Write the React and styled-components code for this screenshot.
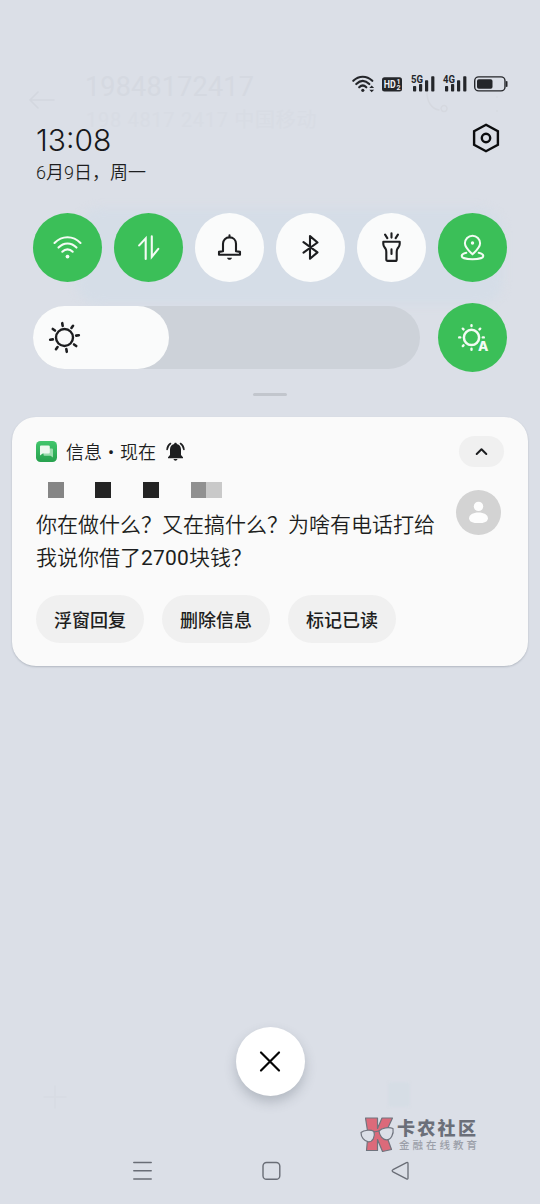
import React from "react";
import styled, { createGlobalStyle } from "styled-components";

const Global = createGlobalStyle`
  * { box-sizing: border-box; }
  html, body { margin: 0; padding: 0; background: #dbdfe7; }
  body { font-family: "Noto Sans CJK SC", sans-serif; color: #1d1e20; }
`;

const Screen = styled.main`
  position: relative;
  width: 540px;
  height: 1204px;
  overflow: hidden;
  display: flex;
  flex-direction: column;
  background: #dbdfe7;
`;

const Icon = styled.svg`
  display: block;
  flex: none;
  overflow: visible;
  fill: none;
  stroke: currentColor;
  stroke-linecap: round;
  stroke-linejoin: round;
`;

/* dimmed conversation under the shade */
const Backdrop = styled.div`
  position: absolute;
  inset: 0;
  pointer-events: none;
`;
const Ghost = styled.div`
  position: absolute;
  left: ${(p) => p.$x}px;
  top: ${(p) => p.$y}px;
  font-size: ${(p) => p.$size}px;
  line-height: 1.2;
  letter-spacing: ${(p) => p.$track || 0}px;
  color: ${(p) => p.$color || "#d5d9e1"};
  white-space: nowrap;
  font-family: Roboto, "Noto Sans CJK SC", sans-serif;
`;
const GhostBubble = styled.div`
  position: absolute;
  left: 76px;
  top: 208px;
  width: 427px;
  height: 97px;
  border-radius: 24px;
  background: #d5dde7;
  filter: blur(4px);
`;
const GhostChip = styled.div`
  position: absolute;
  left: 388px;
  top: 1082px;
  width: 22px;
  height: 25px;
  border-radius: 3px;
  background: #d6dde5;
  filter: blur(1px);
`;

const Content = styled.div`
  position: relative;
  flex: 1;
  display: flex;
  flex-direction: column;
`;

const StatusBar = styled.header`
  display: flex;
  justify-content: flex-end;
  align-items: flex-start;
  padding: 75px 32px 0 0;
  height: 123px;
  color: #24262a;
`;
const StatusItem = styled.div`
  margin-left: ${(p) => p.$gap || 0}px;
`;

const ClockRow = styled.section`
  display: flex;
  justify-content: space-between;
  align-items: flex-start;
  height: 90px;
  padding: 0 40px 0 36px;
`;
const Time = styled.div`
  font: 300 30px/34px Inter, sans-serif;
  color: #17181b;
`;
const DateText = styled.div`
  margin-top: 3px;
  font-family: Roboto, "Noto Sans CJK SC", sans-serif;
  font-size: 18px;
  line-height: 26px;
  font-weight: 350;
  color: #1d1e20;
`;

const Toggles = styled.section`
  display: flex;
  gap: 12px;
  padding: 0 33px;
`;
const RoundButton = styled.button`
  display: flex;
  align-items: center;
  justify-content: center;
  flex: none;
  width: 69px;
  height: 69px;
  padding: 0 1px 1px 0;
  border: 0;
  border-radius: 50%;
  background: ${(p) => (p.$on ? "#3bbf58" : "#fafbfb")};
  color: ${(p) => (p.$on ? "#f3fbf4" : "#1d1e20")};

  & > svg {
    transform: translate(0.5px, 0.4px);
  }
`;

const BrightnessRow = styled.section`
  display: flex;
  align-items: center;
  gap: 18px;
  padding: 0 33px;
  margin-top: 21px;
`;
const Slider = styled.div`
  flex: 1;
  height: 63px;
  border-radius: 32px;
  background: #cdd2d9;
`;
const SliderFill = styled.div`
  display: flex;
  align-items: center;
  width: 135.5px;
  height: 63px;
  padding: 0 0 1px 16px;
  border-radius: 32px;
  background: #fafbfb;

  & > svg {
    transform: translate(0.5px, 0.5px);
  }
`;

const Handle = styled.div`
  width: 34px;
  height: 3px;
  margin: 21px auto 0;
  border-radius: 2px;
  background: #c2c6cd;
`;

const Card = styled.article`
  height: 249px;
  margin: 21px 12px 0;
  padding: 19px 24px 0;
  border-radius: 24px;
  background: #fafafa;
  box-shadow: 0 1px 2px rgba(70, 80, 95, 0.28);
`;
const CardHead = styled.div`
  display: flex;
  align-items: center;
  height: 31px;
`;
const AppName = styled.span`
  margin: -2px 10px 0 9px;
  font-size: 18px;
  line-height: 30px;
  font-weight: 350;
  white-space: nowrap;
`;
const Collapse = styled.button`
  display: flex;
  align-items: center;
  justify-content: center;
  width: 45px;
  height: 31px;
  margin-left: auto;
  padding: 0;
  border: 0;
  border-radius: 16px;
  background: #f0f0f0;
  color: #1d1e20;
`;
const CardBody = styled.div`
  display: flex;
  justify-content: space-between;
  padding-right: 3px;
`;
const Sender = styled.div`
  display: flex;
  height: 16px;
  margin: 15px 0 0 12px;
`;
const Block = styled.span`
  width: 16px;
  height: 16px;
  margin-left: ${(p) => p.$gap}px;
  background: ${(p) => p.$tone};
`;
const Message = styled.p`
  width: 402px;
  margin: 11px 0 0;
  font-family: Roboto, "Noto Sans CJK SC", sans-serif;
  font-size: 21px;
  line-height: 33px;
  font-weight: 350;
  white-space: nowrap;
`;
const Amount = styled.span`
  font-weight: 400;
  letter-spacing: 0.2px;
`;
const Avatar = styled.div`
  display: flex;
  align-items: center;
  justify-content: center;
  width: 45px;
  height: 45px;
  margin-top: 23px;
  border-radius: 50%;
  background: #d3d3d3;
`;
const Actions = styled.div`
  display: flex;
  gap: 18px;
  margin-top: 20px;
`;
const Action = styled.button`
  width: 108px;
  height: 48px;
  padding: 0;
  border: 0;
  border-radius: 24px;
  background: #f0f0f0;
  color: #1d1e20;
  font: 500 18px/26px "Noto Sans CJK SC", sans-serif;
`;

const CloseButton = styled.button`
  display: flex;
  align-items: center;
  justify-content: center;
  width: 69px;
  height: 69px;
  margin: auto auto 65px;
  padding: 0;
  border: 0;
  border-radius: 50%;
  background: #fff;
  color: #050505;
  box-shadow: 0 6px 12px rgba(60, 70, 85, 0.25);
`;
const NavBar = styled.nav`
  display: flex;
  justify-content: space-between;
  height: 43px;
  padding: 0 131px 0 133px;
  color: #696d76;
`;

const Watermark = styled.div`
  position: absolute;
  left: 360px;
  top: 1116px;
  display: flex;
  gap: 2px;
`;
const Brand = styled.div`
  height: 22px;
  font-size: 18px;
  line-height: 22px;
  font-weight: 900;
  letter-spacing: 2.3px;
  white-space: nowrap;
  color: #6b6f79;
`;
const Tagline = styled.div`
  margin-left: 2px;
  font-size: 10.5px;
  line-height: 13px;
  font-weight: 500;
  letter-spacing: 3px;
  white-space: nowrap;
  color: #9b9fa9;
`;

const StatusWifi = () => (
  <Icon width="24" height="18" viewBox="0 0 24 18" strokeWidth="2.2" strokeLinecap="butt">
    <path d="M1.3 5.8C7 .4 14.500 .4 20.300 5.800M4.300 9C8.500 5 13.200 5 17.300 9M7.200 12.300C9.500 10 12 10 14.300 12.300" />
    <circle cx="10.800" cy="15.300" r="1.600" fill="currentColor" stroke="none" />
    <path d="M17.300 13 19.700 10.400 22.100 13ZM17.300 14.700 19.700 17.300 22.100 14.700Z" fill="currentColor" stroke="none" />
  </Icon>
);

const HdBadge = () => (
  <Icon width="20" height="18" viewBox="0 0 20 18">
    <rect x="0" y="2.300" width="20" height="14.300" rx="2.500" fill="currentColor" stroke="none" />
    <text x="1.800" y="13.300" fontSize="11" fontWeight="700" fontFamily="Roboto, sans-serif" fill="#eef0f4" stroke="none" textLength="12" lengthAdjust="spacingAndGlyphs">HD</text>
    <text x="14.400" y="9" fontSize="7" fontWeight="700" fontFamily="Roboto, sans-serif" fill="#eef0f4" stroke="none">1</text>
    <text x="14.400" y="15.300" fontSize="7" fontWeight="700" fontFamily="Roboto, sans-serif" fill="#eef0f4" stroke="none">2</text>
  </Icon>
);

const Signal = ({ label }) => (
  <Icon width="24" height="18" viewBox="0 0 24 18">
    <g fill="currentColor" stroke="none">
      <rect x="2" y="11" width="3.200" height="5.500" rx="0.800" />
      <rect x="8" y="9" width="3.200" height="7.500" rx="0.800" />
      <rect x="14" y="5.300" width="3.200" height="11.200" rx="0.800" />
      <rect x="20.200" y="1.300" width="3.200" height="15.200" rx="0.800" />
      <text x="0" y="8" fontSize="10" fontWeight="700" fontFamily="Roboto, sans-serif" textLength="12" lengthAdjust="spacingAndGlyphs">{label}</text>
    </g>
  </Icon>
);

const Battery = () => (
  <Icon width="34" height="18" viewBox="0 0 34 18">
    <rect x="0.700" y="1.900" width="30.300" height="14" rx="4" strokeWidth="1.400" />
    <rect x="3" y="4.300" width="15.500" height="9.400" rx="1.800" fill="currentColor" stroke="none" />
    <path d="M32.700 6.800v4.400" strokeWidth="1.600" />
  </Icon>
);

const SettingsIcon = () => (
  <Icon width="28" height="30" viewBox="0 0 28 30" strokeWidth="2.400" color="#0c0d0f">
    <path d="M14 1.800 25.900 8.300V21.700L14 28.200 2.100 21.700V8.300Z" strokeLinejoin="miter" />
    <circle cx="14" cy="15" r="4.200" />
  </Icon>
);

const WifiIcon = () => (
  <Icon width="30" height="24" viewBox="0 0 30 24" strokeWidth="2.100">
    <path d="M2 7.600C9.500-.1 20.500-.1 28 7.600M6 12.200C11.300 6.700 18.700 6.700 24 12.200M9.800 16.300C12.800 13.200 17.200 13.200 20.200 16.300" />
    <circle cx="15" cy="21.200" r="1.900" fill="currentColor" stroke="none" />
  </Icon>
);

const DataIcon = () => (
  <Icon width="22" height="24" viewBox="0 0 22 24" strokeWidth="2.100" strokeLinecap="butt">
    <path d="M8.200 23.500V3L1.700 10M14.300 1V21.500L20.800 13.500" strokeLinejoin="miter" />
  </Icon>
);

const BellIcon = () => (
  <Icon width="24" height="26" viewBox="0 0 24 26" strokeWidth="2.100">
    <path d="M12 1V3M5.500 16.800V9.400C5.500 5.500 8.200 3 12 3S18.500 5.500 18.500 9.400V16.800L22.500 17.500V20.300H1.500V17.500Z" />
    <path d="M9.500 23.400h5c-.5 1.500-1.400 2-2.500 2s-2-.5-2.500-2Z" fill="currentColor" stroke="none" />
  </Icon>
);

const BluetoothIcon = () => (
  <Icon width="18" height="26" viewBox="0 0 18 26" strokeWidth="2.100">
    <path d="M2 7.700 16 18 8.500 24.300V1.700L16 8.100 2 18.300" />
  </Icon>
);

const TorchIcon = () => (
  <Icon width="20" height="30" viewBox="0 0 20 30" strokeWidth="2.100" strokeLinecap="butt">
    <path d="M1.800 9.300H18.200V11.700C18.200 14 17 14.800 16 16.200 15.300 17.200 15.200 18 15.200 19.500V27Q15.200 28.500 13.800 28.500H6.200Q4.800 28.500 4.800 27V19.500C4.800 18 4.700 17.200 4 16.200 3 14.800 1.800 14 1.800 11.700ZM10 17V21.500M10 .8V5.200M3.600 2.200 5.800 5.700M16.400 2.200 14.200 5.700" />
  </Icon>
);

const LocationIcon = () => (
  <Icon width="24" height="26" viewBox="0 0 24 26" strokeWidth="2">
    <path d="M12 20C8.200 16.300 4.400 13.100 4.400 8.900a7.600 7.600 0 0 1 15.200 0C19.600 13.100 15.800 16.300 12 20Z" />
    <path d="M5.800 18.400C2.800 19.100 1.200 20.200 1.200 21.500 1.200 23.500 6 24.800 12 24.800S22.800 23.500 22.800 21.500C22.800 20.200 21.200 19.100 18.200 18.400" />
    <circle cx="12" cy="8.600" r="1.700" fill="currentColor" stroke="none" />
  </Icon>
);

const rays = [0, 45, 90, 135, 180, 225, 270, 315];

const SunIcon = () => (
  <Icon width="30" height="30" viewBox="0 0 30 30" strokeLinecap="butt">
    <circle cx="15" cy="15" r="8.500" strokeWidth="2.400" />
    <g strokeWidth="2.600">
      {rays.map((r) => (
        <path key={r} d="M15 .500V3.200" transform={`rotate(${r - 9} 15 15)`} />
      ))}
    </g>
  </Icon>
);

const AutoSunIcon = () => (
  <Icon width="30" height="28" viewBox="0 0 30 28">
    <circle cx="14" cy="14" r="7.600" strokeWidth="2.500" />
    <g strokeWidth="2.400">
      {rays.filter((r) => r !== 135).map((r) => (
        <path key={r} d="M14 1.700V2.700" transform={`rotate(${r} 14 14)`} />
      ))}
    </g>
    <path d="M22 27.200V20H28V27.200Z" strokeWidth="2" stroke="#3bbf58" fill="#3bbf58" />
    <text x="20.500" y="27.300" fontSize="13.500" fontWeight="800" fontFamily="Inter, sans-serif" fill="currentColor" stroke="none">A</text>
  </Icon>
);

const MessagesIcon = () => (
  <Icon width="21" height="21" viewBox="0 0 21 21">
    <defs>
      <linearGradient id="msg" x1="0" y1="0" x2="0" y2="1">
        <stop offset="0" stopColor="#42c66c" />
        <stop offset="1" stopColor="#27a14e" />
      </linearGradient>
    </defs>
    <rect width="21" height="21" rx="4.500" fill="url(#msg)" stroke="none" />
    <path d="M8 7.500H16Q17 7.500 17 8.500V16.500L14.500 14.800H8.500Q7.500 14.800 7.500 13.800Z" fill="#9bdcae" stroke="none" />
    <path d="M5 4.500H12.500Q13.800 4.500 13.800 5.800V11.200Q13.800 12.500 12.500 12.500H6.700L4 14.500V5.500Q4 4.500 5 4.500Z" fill="#edf8ef" stroke="none" />
  </Icon>
);

const RingIcon = () => (
  <Icon width="19" height="20" viewBox="0 0 19 20" strokeWidth="1.600" strokeLinecap="butt">
    <path d="M9.500 .700C8.700 .700 8.200 1.200 8.200 1.900 5.200 2.500 4 4.700 4 7.500V13L2 15.300V16.300H17V15.300L15 13V7.500C15 4.700 13.800 2.500 10.800 1.900 10.800 1.200 10.300 .700 9.500 .700ZM7.500 17H11.500C11.200 18.200 10.400 18.700 9.500 18.700S7.800 18.200 7.500 17Z" fill="currentColor" stroke="none" />
    <path d="M1.100 7.500C1.300 4.900 2.500 2.800 4.500 1.500M17.900 7.500C17.700 4.900 16.500 2.800 14.500 1.500" />
  </Icon>
);

const ChevronUp = () => (
  <Icon width="13" height="9" viewBox="0 0 13 9" strokeWidth="2" strokeLinecap="butt" strokeLinejoin="miter">
    <path d="M1.700 7 6.500 2.300 11.300 7" />
  </Icon>
);

const PersonIcon = () => (
  <Icon width="21" height="23" viewBox="-.5 -.5 21 23">
    <g fill="#fdfdfd" stroke="none">
      <circle cx="10" cy="4.900" r="4.700" />
      <path d="M.600 16.700C.600 13.300 4.600 11 10 11S19.400 13.300 19.400 16.700C19.400 20.300 15.500 21.600 10 21.600S.600 20.300 .600 16.700Z" />
    </g>
  </Icon>
);

const CloseIcon = () => (
  <Icon width="20" height="20" viewBox="0 0 20 20" strokeWidth="2.200">
    <path d="M1 .500 19 18.500M19 .500 1 18.500" />
  </Icon>
);

const MenuKey = () => (
  <Icon width="19" height="19" viewBox="0 0 19 19" strokeWidth="1.500">
    <path d="M.800 1.500H18.200M.800 9.800H18.200M.800 18H18.200" />
  </Icon>
);
const HomeKey = () => (
  <Icon width="19" height="19" viewBox="0 0 19 19" strokeWidth="1.400">
    <rect x="1" y="1.500" width="16.800" height="16.800" rx="3.600" />
  </Icon>
);
const BackKey = () => (
  <Icon width="18" height="19" viewBox="0 0 18 19" strokeWidth="1.300">
    <path d="M15.500 1.700Q17 1 17 2.600V17Q17 18.600 15.500 17.900L2 10.900Q.300 9.800 2 8.700Z" />
  </Icon>
);

const BrandMark = () => (
  <Icon width="35" height="36" viewBox="0 0 35 36" strokeWidth="1.200" color="#70747e">
    <path d="M5.500 2H17.500V12.500L22 2H32.500L25.500 17 31.500 33.500 22.500 35.500 17.500 23.500V34.500H6.500L8 18Z" fill="#dc6a7a" />
    <path d="M1 16.500C4 13.800 11 13.500 14 15.500 15.500 21 12.500 26 8.500 25.800 4 25.500 1 21 1 16.500ZM19 15C22 11.500 29 10.800 33 12.500 34 18 31 23.800 26.500 23.800 22.500 23.800 19.500 19.500 19 15Z" fill="#dbdfe7" />
    <path d="M14 16 19 15" />
  </Icon>
);

const BackArrow = styled(Icon)`
  position: absolute;
  left: 29px;
  top: 91px;
  color: #d3d7df;
`;
const CallGhost = styled(Icon)`
  position: absolute;
  left: 426px;
  top: 92px;
  color: #d5d8df;
`;
const PlusGhost = styled(Icon)`
  position: absolute;
  left: 43px;
  top: 1085px;
  color: #d8dce3;
`;

export default function App() {
  return (
    <Screen>
      <Global />
      <Backdrop>
        <BackArrow width="26" height="18" viewBox="0 0 26 18" strokeWidth="1.600">
          <path d="M25 9H1L9 1M1 9 9 17" />
        </BackArrow>
        <Ghost $x={85} $y={71} $size={27} $track={0.2}>19848172417</Ghost>
        <Ghost $x={86} $y={108} $size={20} $track={0.7} $color="#d8dce4">198 4817 2417 中国移动</Ghost>
        <CallGhost width="24" height="24" viewBox="0 0 24 24" strokeWidth="1.500">
          <path d="M1 1C1 10 6 17 13 18M18 13.500a3 3 0 1 0 .1 0M71 5v.1M71 19v.1" />
        </CallGhost>
        <GhostBubble />
        <PlusGhost width="24" height="24" viewBox="0 0 24 24" strokeWidth="1.500">
          <path d="M12 1V23M1 12H23" />
        </PlusGhost>
        <GhostChip />
      </Backdrop>
      <Content>
        <StatusBar>
          <StatusItem><StatusWifi /></StatusItem>
          <StatusItem $gap={6}><HdBadge /></StatusItem>
          <StatusItem $gap={9}><Signal label="5G" /></StatusItem>
          <StatusItem $gap={8}><Signal label="4G" /></StatusItem>
          <StatusItem $gap={7}><Battery /></StatusItem>
        </StatusBar>
        <ClockRow>
          <div>
            <Time>13:08</Time>
            <DateText>6月9日，周一</DateText>
          </div>
          <SettingsIcon />
        </ClockRow>
        <Toggles>
          <RoundButton $on><WifiIcon /></RoundButton>
          <RoundButton $on><DataIcon /></RoundButton>
          <RoundButton><BellIcon /></RoundButton>
          <RoundButton><BluetoothIcon /></RoundButton>
          <RoundButton><TorchIcon /></RoundButton>
          <RoundButton $on><LocationIcon /></RoundButton>
        </Toggles>
        <BrightnessRow>
          <Slider><SliderFill><SunIcon /></SliderFill></Slider>
          <RoundButton $on><AutoSunIcon /></RoundButton>
        </BrightnessRow>
        <Handle />
        <Card>
          <CardHead>
            <MessagesIcon />
            <AppName>信息・现在</AppName>
            <RingIcon />
            <Collapse><ChevronUp /></Collapse>
          </CardHead>
          <CardBody>
            <div>
              <Sender>
                <Block $gap={0} $tone="#858585" />
                <Block $gap={31} $tone="#242424" />
                <Block $gap={32} $tone="#242424" />
                <Block $gap={32} $tone="#909090" />
                <Block $gap={-1} $tone="#c9c9c9" />
              </Sender>
              <Message>你在做什么？又在搞什么？为啥有电话打给<br />我说你借了<Amount>2700</Amount>块钱？</Message>
            </div>
            <Avatar><PersonIcon /></Avatar>
          </CardBody>
          <Actions>
            <Action>浮窗回复</Action>
            <Action>删除信息</Action>
            <Action>标记已读</Action>
          </Actions>
        </Card>
        <CloseButton><CloseIcon /></CloseButton>
        <NavBar>
          <MenuKey />
          <HomeKey />
          <BackKey />
        </NavBar>
      </Content>
      <Watermark>
        <BrandMark />
        <div>
          <Brand>卡农社区</Brand>
          <Tagline>金融在线教育</Tagline>
        </div>
      </Watermark>
    </Screen>
  );
}
